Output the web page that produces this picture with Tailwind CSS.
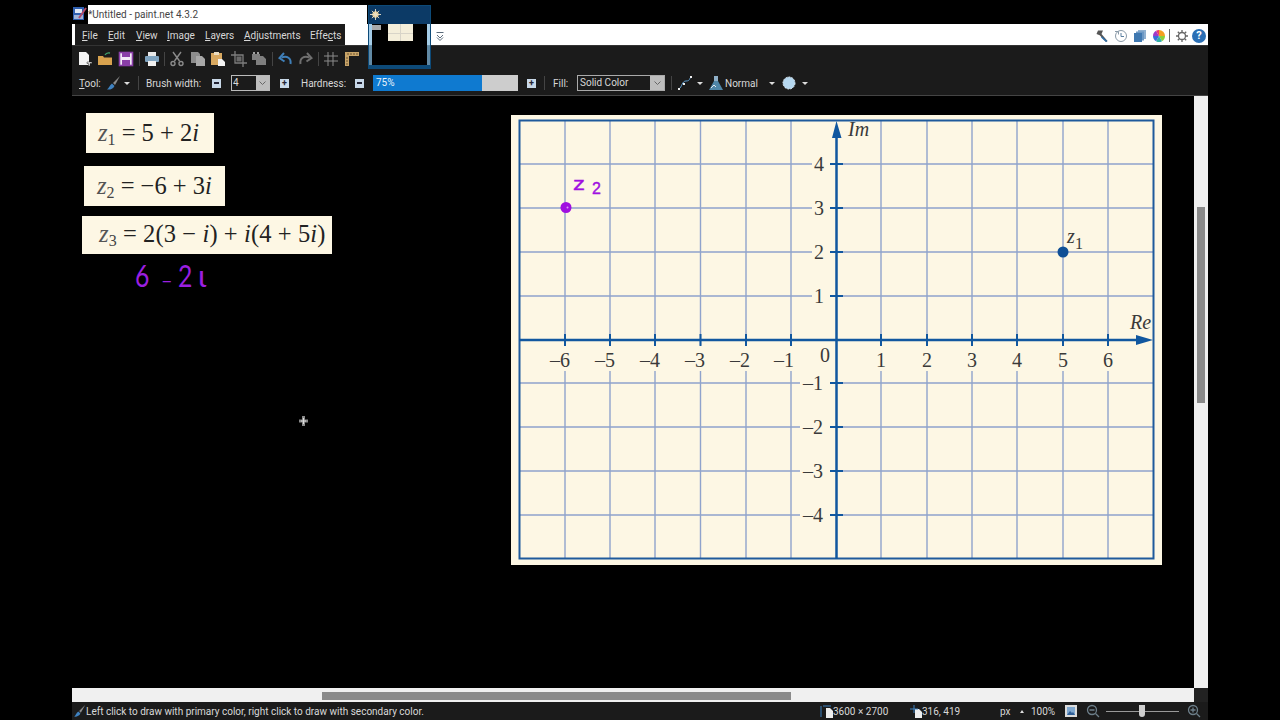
<!DOCTYPE html>
<html lang="en">
<head>
<meta charset="UTF-8">
<title>paint.net</title>
<script src="https://cdn.jsdelivr.net/npm/@tailwindcss/browser@4"></script>
</head>
<body class="bg-black w-[1280px] h-[720px] overflow-hidden font-['Roboto',sans-serif] text-[10px] text-[#d8d8d8]">
<div class="relative ml-[72px] w-[1136px] h-[720px] flex flex-col">

  <!-- Title bar -->
  <div class="h-[24px] pt-[5px] flex">
    <svg class="w-[16px] h-[19px] mt-[-1px]" viewBox="0 0 16 19"><rect x="1" y="3" width="11" height="13" fill="#2f5fb0"/><rect x="3" y="5" width="7" height="4" fill="#dfe8f5"/><rect x="2" y="11" width="9" height="4" fill="#9fb4d8"/><path d="M14 4 L7 14" stroke="#b04a6a" stroke-width="2"/></svg>
    <div class="w-[279px] h-[19px] bg-white text-[#444] text-[10px] leading-[19px] whitespace-nowrap">*Untitled - paint.net 4.3.2</div>
  </div>

  <!-- Menu row -->
  <div class="h-[22px] bg-white flex border-b border-[#333]">
    <div class="ml-[3px] w-[270px] h-[21px] bg-[#1b1b1b] flex items-center pl-[7px] pt-[2px] whitespace-nowrap">
      <span class="w-[26px]"><span class="underline">F</span>ile</span>
      <span class="w-[28px]"><span class="underline">E</span>dit</span>
      <span class="w-[31px]"><span class="underline">V</span>iew</span>
      <span class="w-[38px]"><span class="underline">I</span>mage</span>
      <span class="w-[39px]"><span class="underline">L</span>ayers</span>
      <span class="w-[66px]"><span class="underline">A</span>djustments</span>
      <span>Effe<span class="underline">c</span>ts</span>
    </div>
    <svg class="ml-[91px] mt-[8px] w-[8px] h-[9px]" viewBox="0 0 8 9" fill="none" stroke="#5a6a7a" stroke-width="1"><path d="M0.5 0.5h7M1 3l3 3 3-3M1 5.5l3 3 3-3"/></svg>
    <div class="ml-auto mr-[2px] mt-[4px] h-[15px] flex items-center">
      <svg class="w-[14px] h-[14px]" viewBox="0 0 14 14"><path d="M3 1.5 L8 1.5 L6.5 5 L12.5 12 L11 13 L4.7 6.2 L1.5 5 Z" fill="#555"/><path d="M7 7.5 L12.5 12 L11 13 L6 8.5 Z" fill="#2f6fa8"/></svg>
      <svg class="ml-[5px] w-[14px] h-[14px]" viewBox="0 0 14 14" fill="none" stroke="#8a9aa8"><circle cx="7" cy="7" r="5.5"/><path d="M7 4v3.5h3" stroke="#5a7fa0"/><path d="M1 2.5h3.5v3" stroke="#8a9aa8"/></svg>
      <svg class="ml-[5px] w-[14px] h-[14px]" viewBox="0 0 14 14"><rect x="5" y="1" width="8" height="9" fill="#8fb0d0"/><rect x="3" y="2.5" width="8" height="9" fill="#6c98c4"/><rect x="1" y="4" width="8" height="9" fill="#3f78b0"/></svg>
      <svg class="ml-[5px] w-[14px] h-[14px]" viewBox="0 0 14 14"><path d="M7 7V1a6 6 0 0 1 6 6z" fill="#f4a020"/><path d="M7 7h6a6 6 0 0 1-3 5.2z" fill="#8ccf3a"/><path d="M7 7l3 5.2A6 6 0 0 1 4 12.2z" fill="#30b0a8"/><path d="M7 7l-3 5.2A6 6 0 0 1 1 7z" fill="#3a6fd8"/><path d="M7 7H1a6 6 0 0 1 3-5.2z" fill="#a03ac8"/><path d="M7 7L4 1.8A6 6 0 0 1 7 1z" fill="#e83a70"/></svg>
      <div class="ml-[3px] w-px h-[13px] bg-[#666]"></div>
      <svg class="ml-[5px] w-[14px] h-[14px]" viewBox="0 0 14 14" fill="none" stroke="#666" stroke-width="1.3"><circle cx="7" cy="7" r="3.5"/><path d="M7 1v2.5M7 10.5V13M1 7h2.5M10.5 7H13M2.8 2.8l1.7 1.7M9.5 9.5l1.7 1.7M2.8 11.2l1.7-1.7M9.5 4.5l1.7-1.7"/></svg>
      <div class="ml-[3px] w-[14px] h-[14px] rounded-full bg-[#2a6fb5] text-white text-[11px] leading-[14px] font-bold text-center">?</div>
    </div>
  </div>

  <!-- Toolbar: file and edit icons -->
  <div class="h-[25px] bg-[#1b1b1b] flex items-center pl-[5px]">
    <svg class="w-4 h-4" viewBox="0 0 16 16"><path d="M2 1h7l3 3v10H2z" fill="#f2f2f2"/><path d="M10 11h5v1.5h-2V15h-1.5v-2.5H10z" fill="#f2f2f2" stroke="#1b1b1b" stroke-width=".5"/></svg>
    <svg class="ml-[4px] w-4 h-4" viewBox="0 0 16 16"><path d="M1 5h5l1 1.5h8V14H1z" fill="#d8a24e"/><path d="M8 4c1-2 3-2.5 5-2" fill="none" stroke="#3f9f6a" stroke-width="1.3"/></svg>
    <svg class="ml-[5px] w-4 h-4" viewBox="0 0 16 16"><rect x="1.5" y="1.5" width="13" height="13" fill="#f3eaf7" stroke="#8a3fa8" stroke-width="1.6"/><rect x="4" y="2" width="8" height="4" fill="#8a3fa8"/><rect x="4" y="9" width="8" height="5" fill="#8a3fa8"/></svg>
    <div class="ml-[5px] w-px h-[14px] bg-[#444]"></div>
    <svg class="ml-[4px] w-4 h-4" viewBox="0 0 16 16"><rect x="4" y="1" width="8" height="4" fill="#e8e8e8"/><rect x="1" y="5" width="14" height="6" rx="1" fill="#7fa3bf"/><rect x="4" y="10" width="8" height="5" fill="#f0f0f0"/></svg>
    <div class="ml-[4px] w-px h-[14px] bg-[#444]"></div>
    <svg class="ml-[4px] w-4 h-4" viewBox="0 0 16 16" fill="none" stroke="#8a8a8a" stroke-width="1.4"><path d="M4 1l6.5 9M12 1L5.5 10"/><circle cx="4" cy="12.5" r="2"/><circle cx="12" cy="12.5" r="2"/></svg>
    <svg class="ml-[5px] w-4 h-4" viewBox="0 0 16 16"><path d="M1 1h7l2 2v9H1z" fill="#8c8c8c"/><path d="M6 5h6l3 3v7H6z" fill="#a8a8a8"/></svg>
    <svg class="ml-[4px] w-4 h-4" viewBox="0 0 16 16"><rect x="1" y="2" width="11" height="12" fill="#d8a860"/><rect x="4" y="1" width="5" height="3" fill="#eadcc0"/><path d="M8 8h4l3 3v4H8z" fill="#f2f2f2"/></svg>
    <svg class="ml-[5px] w-4 h-4" viewBox="0 0 16 16" fill="none" stroke="#7d7d7d" stroke-width="1.3"><path d="M4 0v12h12M0 4h12v12"/><rect x="5.5" y="5.5" width="5" height="5" fill="#6a6a6a" stroke="none"/></svg>
    <svg class="ml-[4px] w-4 h-4" viewBox="0 0 16 16"><path d="M1 3h8v2h3l3 3v6H5v-5H1z" fill="#7f7f7f"/><path d="M2 1h2v2H2zM6 1h2v2H6z" fill="#a0a0a0"/></svg>
    <div class="ml-[5px] w-px h-[14px] bg-[#444]"></div>
    <svg class="ml-[4px] w-4 h-4" viewBox="0 0 16 16" fill="none" stroke="#3f7fb8" stroke-width="2"><path d="M13.5 13C14.5 7 10 4.500 4.500 6.500"/><path d="M7 2L2.500 7l5 3.500"/></svg>
    <svg class="ml-[5px] w-4 h-4" viewBox="0 0 16 16" fill="none" stroke="#6f6f6f" stroke-width="2"><path d="M2.500 13C1.500 7 6 4.500 11.500 6.500"/><path d="M9 2l4.500 5-5 3.500"/></svg>
    <div class="ml-[4px] w-px h-[14px] bg-[#444]"></div>
    <svg class="ml-[4px] w-4 h-4" viewBox="0 0 16 16" fill="none" stroke="#8c8c8c"><path d="M5 1v14M10 1v14M1 5h14M1 10h14"/></svg>
    <svg class="ml-[5px] w-4 h-4" viewBox="0 0 16 16"><path d="M1 1h14v4H5v10H1z" fill="#c8a468"/><path d="M4 2v2M7 2v2M10 2v2M13 2v2M2 7h2M2 10h2M2 13h2" stroke="#6a5330"/></svg>
  </div>

  <!-- Toolbar: tool options -->
  <div class="h-[25px] bg-[#1b1b1b] border-b border-[#444] flex items-center pl-[7px] whitespace-nowrap">
    <span class="w-[22px]"><span class="underline">T</span>ool:</span>
    <svg class="ml-[6px] w-[14px] h-[14px]" viewBox="0 0 14 14"><path d="M13 0L6 7l2 2z" fill="#8a8a8a"/><path d="M5 7.500L7.500 10C6 13 3 14 0 13.500 2 12.500 2.500 9 5 7.500z" fill="#3f82c0"/></svg>
    <div class="ml-[3px] w-0 h-0 border-x-[3px] border-x-transparent border-t-[3px] border-t-[#ddd]"></div>
    <div class="ml-[8px] w-px h-[14px] bg-[#444]"></div>
    <span class="ml-[7px] w-[54px]">Brush width:</span>
    <div class="ml-[12px] w-[9px] h-[9px] bg-[#c8d8e8] flex items-center justify-center"><div class="w-[5px] h-[2px] bg-[#223]"></div></div>
    <div class="ml-[10px] w-[39px] h-[16px] border border-[#bbb] flex">
      <div class="w-[24px] bg-[#1b1b1b] leading-[14px] pl-px">4</div>
      <div class="flex-1 bg-[#bdbdbd] flex items-center justify-center"><svg class="w-[7px] h-[4px]" viewBox="0 0 7 4" fill="none" stroke="#666"><path d="M0.500 0.500L3.500 3.500 6.500 0.500"/></svg></div>
    </div>
    <div class="ml-[10px] w-[9px] h-[9px] bg-[#c8d8e8] flex items-center justify-center text-[#223] text-[9px] leading-[9px] font-bold">+</div>
    <span class="ml-[12px] w-[43px]">Hardness:</span>
    <div class="ml-[11px] w-[9px] h-[9px] bg-[#c8d8e8] flex items-center justify-center"><div class="w-[5px] h-[2px] bg-[#223]"></div></div>
    <div class="ml-[9px] w-[145px] h-[16px] bg-[#cdcdcd] flex">
      <div class="w-[109px] h-[16px] bg-[#0f7ad0] leading-[16px] pl-[3px] text-[#e8f2fa]">75%</div>
    </div>
    <div class="ml-[9px] w-[9px] h-[9px] bg-[#c8d8e8] flex items-center justify-center text-[#223] text-[9px] leading-[9px] font-bold">+</div>
    <div class="ml-[8px] w-px h-[14px] bg-[#444]"></div>
    <span class="ml-[8px] w-[14px]">Fill:</span>
    <div class="ml-[10px] w-[88px] h-[16px] border border-[#aaa] flex">
      <div class="w-[72px] bg-[#1b1b1b] leading-[14px] pl-[2px]">Solid Color</div>
      <div class="flex-1 bg-[#bdbdbd] flex items-center justify-center"><svg class="w-[7px] h-[4px]" viewBox="0 0 7 4" fill="none" stroke="#666"><path d="M0.500 0.500L3.500 3.500 6.500 0.500"/></svg></div>
    </div>
    <div class="ml-[6px] w-px h-[14px] bg-[#444]"></div>
    <svg class="ml-[5px] w-4 h-4" viewBox="0 0 16 16"><path d="M2 14C5 12 5 6 9 6S12 4 14 2" fill="none" stroke="#5f9fd0" stroke-width="1"/><rect x="1" y="13" width="2" height="2" fill="#eee"/><rect x="6" y="8" width="2" height="2" fill="#eee"/><rect x="13" y="1" width="2" height="2" fill="#eee"/></svg>
    <div class="ml-[4px] w-0 h-0 border-x-[3px] border-x-transparent border-t-[3px] border-t-[#ddd]"></div>
    <svg class="ml-[6px] w-[14px] h-[14px]" viewBox="0 0 14 14"><path d="M5 1h4v4l5 9H0l5-9z" fill="#4f86a8"/><rect x="5" y="0" width="4" height="5" fill="#8fb0c8"/><path d="M2 12l3-3 2 2" fill="none" stroke="#dfe8ee"/></svg>
    <span class="ml-[2px] w-[32px]">Normal</span>
    <div class="ml-[12px] w-0 h-0 border-x-[3px] border-x-transparent border-t-[3px] border-t-[#ddd]"></div>
    <svg class="ml-[7px] w-[14px] h-[14px]" viewBox="0 0 14 14"><circle cx="7" cy="7" r="6" fill="#b6d8f0" stroke="#dcecf8" stroke-dasharray="2 1"/></svg>
    <div class="ml-[6px] w-0 h-0 border-x-[3px] border-x-transparent border-t-[3px] border-t-[#ddd]"></div>
  </div>

  <!-- Canvas and vertical scrollbar -->
  <div class="h-[592px] flex">
    <div class="relative flex-1 bg-black overflow-hidden">

      <div class="absolute left-[14px] top-[17px] w-[128px] h-[40px] bg-[#fdf7e4] pl-[12px] font-['Liberation_Serif',serif] text-[24.5px] leading-[40px] text-[#222] whitespace-nowrap"><span class="italic text-[#555]">z</span><sub class="text-[16px] text-[#444]">1</sub> = 5 + 2<span class="italic">i</span></div>
      <div class="absolute left-[12px] top-[70px] w-[141px] h-[40px] bg-[#fdf7e4] pl-[13px] font-['Liberation_Serif',serif] text-[24.5px] leading-[40px] text-[#222] whitespace-nowrap"><span class="italic text-[#555]">z</span><sub class="text-[16px] text-[#444]">2</sub> = −6 + 3<span class="italic">i</span></div>
      <div class="absolute left-[10px] top-[120px] w-[250px] h-[38px] bg-[#fdf7e4] pl-[17px] font-['Liberation_Serif',serif] text-[24.5px] tracking-[0.1px] leading-[35px] text-[#222] whitespace-nowrap"><span class="italic text-[#555]">z</span><sub class="text-[16px] text-[#444]">3</sub> = 2(3 − <span class="italic">i</span>) + <span class="italic">i</span>(4 + 5<span class="italic">i</span>)</div>

      <!-- handwritten answer -->
      <div class="absolute left-[63px] top-[159px] flex items-baseline font-['Lato',sans-serif] font-normal text-[31px] leading-[40px] text-[#9b1fe0]">
        <span class="w-[17px] origin-left scale-x-[0.8]">6</span><span class="ml-[9px] w-[12px] text-[20px]">–</span><span class="ml-[5px] w-[17px] origin-left scale-x-[0.8]">2</span><span class="ml-[3px]">ι</span>
      </div>

      <!-- cursor -->
      <svg class="absolute left-[226px] top-[319px] w-[11px] h-[12px]" viewBox="0 0 11 12"><path d="M5.500 1v10M1 6h9" stroke="#8a8a8a" stroke-width="3"/><path d="M5.500 3v6M3 6h5" stroke="#ddd"/></svg>

      <!-- graph -->
      <svg class="absolute left-[439px] top-[19px] w-[651px] h-[450px] font-['Liberation_Serif',serif]" viewBox="511 115 651 450">
        <rect x="511" y="115" width="651" height="450" fill="#fdf7e4"/>
        <path fill="none" stroke="#8fa3cc" stroke-width="1.400" d="
          M565 120V345M565 371V559 M610 120V345M610 371V559 M655 120V345M655 371V559 M700.500 120V345M700.500 371V559
          M746 120V345M746 371V559 M791 120V345M791 371V559
          M881 120V345M881 371V559 M927 120V345M927 371V559 M972 120V345M972 371V559 M1017 120V345M1017 371V559
          M1063 120V345M1063 371V559 M1108 120V345M1108 371V559
          M519 164H812M843 164H1153 M519 208H812M843 208H1153 M519 252H812M843 252H1153 M519 296H812M843 296H1153
          M519 383H800M843 383H1153 M519 427H800M843 427H1153 M519 471H800M843 471H1153 M519 515H800M843 515H1153"/>
        <rect x="519.500" y="120.500" width="634" height="438" fill="none" stroke="#1f5a9c" stroke-width="2"/>
        <path fill="none" stroke="#11579f" stroke-width="2.500" d="M836.500 130V559M519 340H1140"/>
        <path fill="none" stroke="#11579f" stroke-width="2" d="M565 334V346M610 334V346M655 334V346M700.500 334V346M746 334V346M791 334V346M881 334V346M927 334V346M972 334V346M1017 334V346M1063 334V346M1108 334V346
          M830 164H843M830 208H843M830 252H843M830 296H843M830 383H843M830 427H843M830 471H843M830 515H843"/>
        <path fill="#11579f" d="M836.500 121L832 138H841.500ZM1153 340L1136 335V345Z"/>
        <g font-size="20" fill="#3a3a3a">
          <text x="570" y="367" text-anchor="end">–6</text><text x="615" y="367" text-anchor="end">–5</text><text x="660" y="367" text-anchor="end">–4</text>
          <text x="705" y="367" text-anchor="end">–3</text><text x="750" y="367" text-anchor="end">–2</text><text x="794" y="367" text-anchor="end">–1</text>
          <text x="881" y="367" text-anchor="middle">1</text><text x="927" y="367" text-anchor="middle">2</text><text x="972" y="367" text-anchor="middle">3</text>
          <text x="1017" y="367" text-anchor="middle">4</text><text x="1063" y="367" text-anchor="middle">5</text><text x="1108" y="367" text-anchor="middle">6</text>
          <text x="825" y="362" text-anchor="middle">0</text>
          <text x="824" y="171" text-anchor="end">4</text><text x="824" y="215" text-anchor="end">3</text><text x="824" y="259" text-anchor="end">2</text><text x="824" y="303" text-anchor="end">1</text>
          <text x="823" y="390" text-anchor="end">–1</text><text x="823" y="434" text-anchor="end">–2</text><text x="823" y="478" text-anchor="end">–3</text><text x="823" y="522" text-anchor="end">–4</text>
          <text x="848" y="136" font-style="italic">Im</text>
          <text x="1130" y="329" font-style="italic">Re</text>
          <text x="1067" y="243" font-style="italic">z</text>
          <text x="1075" y="249" font-size="16">1</text>
        </g>
        <circle cx="1063" cy="252" r="5.500" fill="#0f4f96"/>
        <circle cx="566" cy="207.500" r="5.500" fill="#a010e0"/>
        <circle cx="567.500" cy="207.500" r="1" fill="#d9a0f0"/>
        <text transform="translate(573 190) scale(1.2 0.9)" font-size="20" fill="#a010e0" stroke="#a010e0" stroke-width="0.4" font-family="Liberation Sans">z</text>
        <text x="592" y="194" font-size="16" fill="#a010e0" stroke="#a010e0" stroke-width="0.4" font-family="Liberation Sans">2</text>
      </svg>
    </div>

    <!-- vertical scrollbar -->
    <div class="w-[14px] bg-[#f0f0f0] pl-[3px] pt-[111px]">
      <div class="w-[8px] h-[196px] bg-[#8a8a8a]"></div>
    </div>
  </div>

  <!-- Horizontal scrollbar -->
  <div class="h-[14px] flex">
    <div class="flex-1 bg-[#f0f0f0] pl-[250px] pt-[4px]">
      <div class="w-[469px] h-[8px] bg-[#8a8a8a]"></div>
    </div>
    <div class="w-[14px] bg-[#222]"></div>
  </div>

  <!-- Status bar -->
  <div class="h-[18px] bg-[#1b1b1b] flex items-center pl-[2px] whitespace-nowrap">
    <svg class="w-[12px] h-[12px]" viewBox="0 0 14 14"><path d="M13 0L6 7l2 2z" fill="#8a8a8a"/><path d="M5 7.500L7.500 10C6 13 3 14 0 13.500 2 12.500 2.500 9 5 7.500z" fill="#3f82c0"/></svg>
    <span class="w-[734px]">Left click to draw with primary color, right click to draw with secondary color.</span>
    <svg class="w-[13px] h-[13px]" viewBox="0 0 13 13"><path d="M6 3h4l3 3v7H6z" fill="#eee"/><path d="M1 1v11M3 1h8" stroke="#3f82c0" fill="none"/></svg>
    <span class="w-[77px]">3600 × 2700</span>
    <svg class="w-[12px] h-[13px]" viewBox="0 0 12 13"><path d="M5 4h4l3 3v6H5z" fill="#eee"/><path d="M4 0v8M0 4h8" stroke="#3f82c0" fill="none"/></svg>
    <span class="w-[78px]">316, 419</span>
    <span class="w-[20px]">px</span>
    <div class="w-0 h-0 border-x-[2.500px] border-x-transparent border-b-[3px] border-b-[#ddd]"></div>
    <span class="ml-[7px] w-[34px]">100%</span>
    <svg class="w-[12px] h-[12px]" viewBox="0 0 12 12"><rect width="12" height="12" fill="#dcdcdc"/><rect x="2" y="2" width="8" height="8" fill="#7fa8d0"/><path d="M2 10l3-4 2 2 1-1 2 3z" fill="#2f5f98"/></svg>
    <svg class="ml-[9px] w-[14px] h-[14px]" viewBox="0 0 14 14" fill="none" stroke="#6d7f8a" stroke-width="1.300"><circle cx="6" cy="6" r="4.500"/><path d="M9.500 9.500L13 13M3.500 6h5"/></svg>
    <div class="relative ml-[6px] w-[73px] h-px bg-[#999]">
      <div class="absolute left-[33px] top-[-6px] w-[6px] h-[12px] bg-[#cfcfcf] rounded-b-[3px]"></div>
    </div>
    <svg class="ml-[8px] w-[14px] h-[14px]" viewBox="0 0 14 14" fill="none" stroke="#6d7f8a" stroke-width="1.300"><circle cx="6" cy="6" r="4.500"/><path d="M9.500 9.500L13 13M3.500 6h5M6 3.500v5"/></svg>
  </div>

  <!-- Taskbar thumbnail -->
  <div class="absolute left-[296px] top-[5px] w-[63px] h-[64px] border border-[#0d4a78] flex flex-col">
    <div class="h-[18px] bg-[#0c3a66] pl-[1px] pt-[3px]">
      <svg class="w-[11px] h-[11px]" viewBox="0 0 12 12"><circle cx="6" cy="6" r="3.500" fill="#e8c98a"/><path d="M6 0v12M0 6h12M2 2l8 8M10 2l-8 8" stroke="#e8e0c8"/></svg>
    </div>
    <div class="flex-1 flex">
      <div class="w-[3px] bg-[#7fb8de]/70"></div>
      <div class="relative flex-1 bg-black">
        <div class="absolute left-0 top-[1px] w-[9px] h-[5px] bg-[#aaa]"></div>
        <div class="absolute left-[16px] top-0 w-[25px] h-[17px] bg-[#f4eeda]">
          <div class="absolute left-[12px] top-0 w-px h-[17px] bg-[#d8d4c8]"></div>
          <div class="absolute left-0 top-[9px] w-[25px] h-px bg-[#d8d4c8]"></div>
        </div>
      </div>
      <div class="w-[3px] bg-[#7fb8de]/70"></div>
    </div>
    <div class="h-[3px] bg-[#0d4a78]"></div>
  </div>
</div>
</body>
</html>
